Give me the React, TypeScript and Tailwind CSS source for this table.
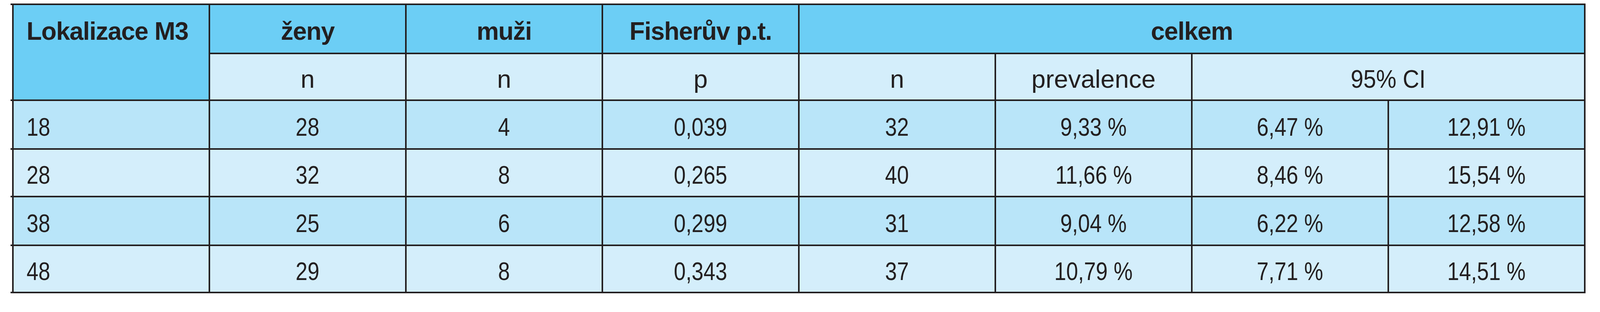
const rows = [
	{ loc: "18", f: "28", m: "4", p: "0,039", n: "32", prev: "9,33 %", lo: "6,47 %", hi: "12,91 %" },
	{ loc: "28", f: "32", m: "8", p: "0,265", n: "40", prev: "11,66 %", lo: "8,46 %", hi: "15,54 %" },
	{ loc: "38", f: "25", m: "6", p: "0,299", n: "31", prev: "9,04 %", lo: "6,22 %", hi: "12,58 %" },
	{ loc: "48", f: "29", m: "8", p: "0,343", n: "37", prev: "10,79 %", lo: "7,71 %", hi: "14,51 %" },
];

const head =
	"flex items-center justify-center pt-3 bg-[#6ccef5] font-['Liberation_Sans',Arial,sans-serif] font-bold text-[64px] tracking-[-0.02em]";
const sub =
	"flex items-center justify-center pt-3 bg-[#d4eefb] font-['Liberation_Sans',Arial,sans-serif] text-[65px]";
const num = "flex items-center justify-center pt-3 font-['Liberation_Sans',Arial,sans-serif] text-[65px]";

export default function App() {
	return (
		<div className="min-h-screen bg-white pt-[9px] pl-[27px]">
			<div className="grid w-[4032px] grid-cols-[4px_repeat(8,minmax(0,1fr))] grid-rows-[122px_116px_121px_118px_121px_117px] gap-[4px] bg-[#231f20] py-[4px] pr-[4px] text-[#231f20]">
				{/* header */}
				<div className="row-span-2 bg-white" />
				<div className="row-span-2 bg-[#6ccef5]">
					<div className="flex h-[122px] items-center pt-3 pl-[33px] font-['Liberation_Sans',Arial,sans-serif] font-bold text-[64px] tracking-[-0.02em]">
						Lokalizace M3
					</div>
				</div>
				<div className={head}>ženy</div>
				<div className={head}>muži</div>
				<div className={head}>Fisherův p.t.</div>
				<div className={`${head} col-span-4`}>celkem</div>

				<div className={sub}>n</div>
				<div className={sub}>n</div>
				<div className={sub}>p</div>
				<div className={sub}>n</div>
				<div className={sub}>prevalence</div>
				<div className={`${sub} col-span-2`}>
					<span className="inline-block scale-x-[0.9]">95% CI</span>
				</div>

				{rows.map((r, i) => {
					const bg = i % 2 === 0 ? "bg-[#b9e5f9]" : "bg-[#d4eefb]";
					return [
						<div key={`x${i}`} className="bg-white" />,
						<div
							key={`l${i}`}
							className={`${bg} flex items-center pt-3 pl-[33px] font-['Liberation_Sans',Arial,sans-serif] text-[65px]`}
						>
							<span className="inline-block origin-left scale-x-[0.84]">{r.loc}</span>
						</div>,
						...[r.f, r.m, r.p, r.n, r.prev, r.lo, r.hi].map((v, j) => (
							<div key={`c${i}-${j}`} className={`${num} ${bg}`}>
								<span className="inline-block scale-x-[0.84]">{v}</span>
							</div>
						)),
					];
				})}
			</div>
		</div>
	);
}
